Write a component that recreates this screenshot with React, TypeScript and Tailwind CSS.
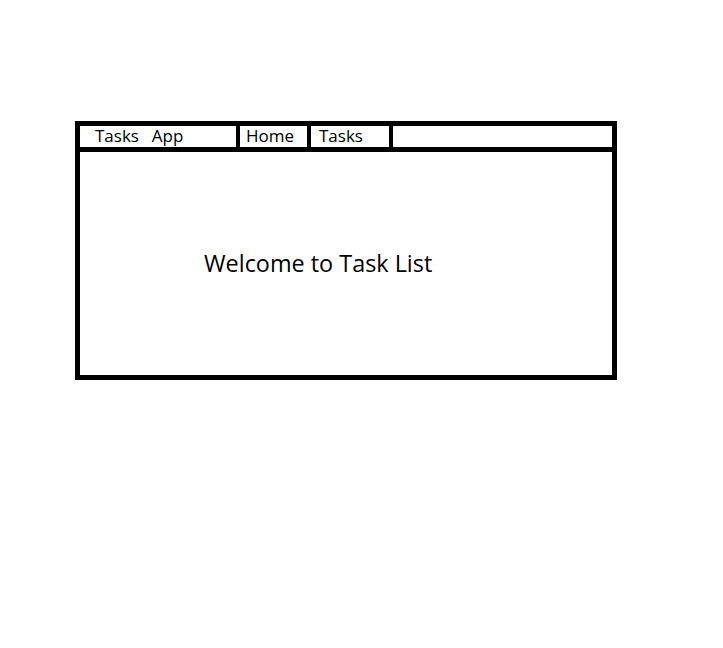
const App = () => {
  return (
    <div className="min-h-[648px] w-[723px] bg-white pl-[75px] pt-[121px] font-['Open_Sans','Noto_Sans',sans-serif] text-black">
      <div className="flex h-[259px] w-[542px] flex-col border-[5px] border-black">
        <div className="flex h-[26px] shrink-0 border-b-[5px] border-black text-[17px] leading-[19px]">
          <div className="w-[156px] whitespace-pre pl-[15px] [word-spacing:2px]">Tasks  App</div>
          <div className="w-[71px] border-l-4 border-black pl-[6px]">Home</div>
          <div className="w-[82px] border-l-4 border-black pl-[8px]">Tasks</div>
          <div className="flex-1 border-l-4 border-black" />
        </div>
        <div className="flex flex-1 items-center pl-[124px] text-[23.4px]">
          Welcome to Task List
        </div>
      </div>
    </div>
  );
};

export default App;
